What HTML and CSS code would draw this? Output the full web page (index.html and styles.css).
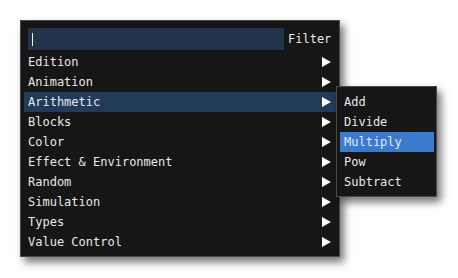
FILE: index.html
```html
<!DOCTYPE html>
<html>
<head>
<meta charset="utf-8">
<link rel="stylesheet" href="styles.css">
</head>
<body>
<div class="menu">
  <div class="filter-row">
    <div class="filter-input"><span class="caret"></span></div>
    <span class="filter-label">Filter</span>
  </div>
  <ul class="items">
    <li class="item"><span>Edition</span><span class="arrow"></span></li>
    <li class="item"><span>Animation</span><span class="arrow"></span></li>
    <li class="item active"><span>Arithmetic</span><span class="arrow"></span></li>
    <li class="item"><span>Blocks</span><span class="arrow"></span></li>
    <li class="item"><span>Color</span><span class="arrow"></span></li>
    <li class="item"><span>Effect &amp; Environment</span><span class="arrow"></span></li>
    <li class="item"><span>Random</span><span class="arrow"></span></li>
    <li class="item"><span>Simulation</span><span class="arrow"></span></li>
    <li class="item"><span>Types</span><span class="arrow"></span></li>
    <li class="item"><span>Value Control</span><span class="arrow"></span></li>
  </ul>
  <ul class="submenu">
    <li class="sub-item">Add</li>
    <li class="sub-item">Divide</li>
    <li class="sub-item selected">Multiply</li>
    <li class="sub-item">Pow</li>
    <li class="sub-item">Subtract</li>
  </ul>
</div>
</body>
</html>
```
FILE: styles.css
```css
html, body {
  margin: 0;
  background: #ffffff;
}
body {
  padding: 20px;
  font-family: "DejaVu Sans Mono", "Liberation Mono", monospace;
  font-size: 12px;
  color: #e8e8e8;
}
.menu {
  position: relative;
  box-sizing: border-box;
  width: 320px;
  height: 237px;
  background: #161616;
  border: 1px solid #4a4a4a;
  padding: 7px 3px 4px 3px;
  box-shadow: 4px 5px 8px rgba(0, 0, 0, 0.55);
}
.filter-row {
  display: flex;
  align-items: center;
  height: 22px;
  margin: 0 0 2px 4px;
  gap: 4px;
}
.filter-input {
  width: 256px;
  height: 22px;
  background: #22334b;
  display: flex;
  align-items: center;
}
.caret {
  display: block;
  width: 1px;
  height: 13px;
  margin-left: 4px;
  background: #f0f0f0;
}
.filter-label {
  line-height: 22px;
}
.items, .submenu {
  list-style: none;
  margin: 0;
  padding: 0;
}
.item {
  display: flex;
  justify-content: space-between;
  align-items: center;
  height: 20px;
  padding: 0 5px 0 4px;
}
.item.active {
  background: #223b58;
}
.arrow {
  width: 0;
  height: 0;
  border-top: 5px solid transparent;
  border-bottom: 5px solid transparent;
  border-left: 9px solid #ffffff;
}
.submenu {
  position: absolute;
  left: 315px;
  top: 65px;
  box-sizing: border-box;
  width: 101px;
  background: #161616;
  border: 1px solid #4a4a4a;
  padding: 5px 2px 4px 3px;
  box-shadow: 4px 5px 8px rgba(0, 0, 0, 0.55);
}
.sub-item {
  height: 20px;
  line-height: 20px;
  padding-left: 4px;
}
.sub-item.selected {
  background: #3a7bce;
}
```
